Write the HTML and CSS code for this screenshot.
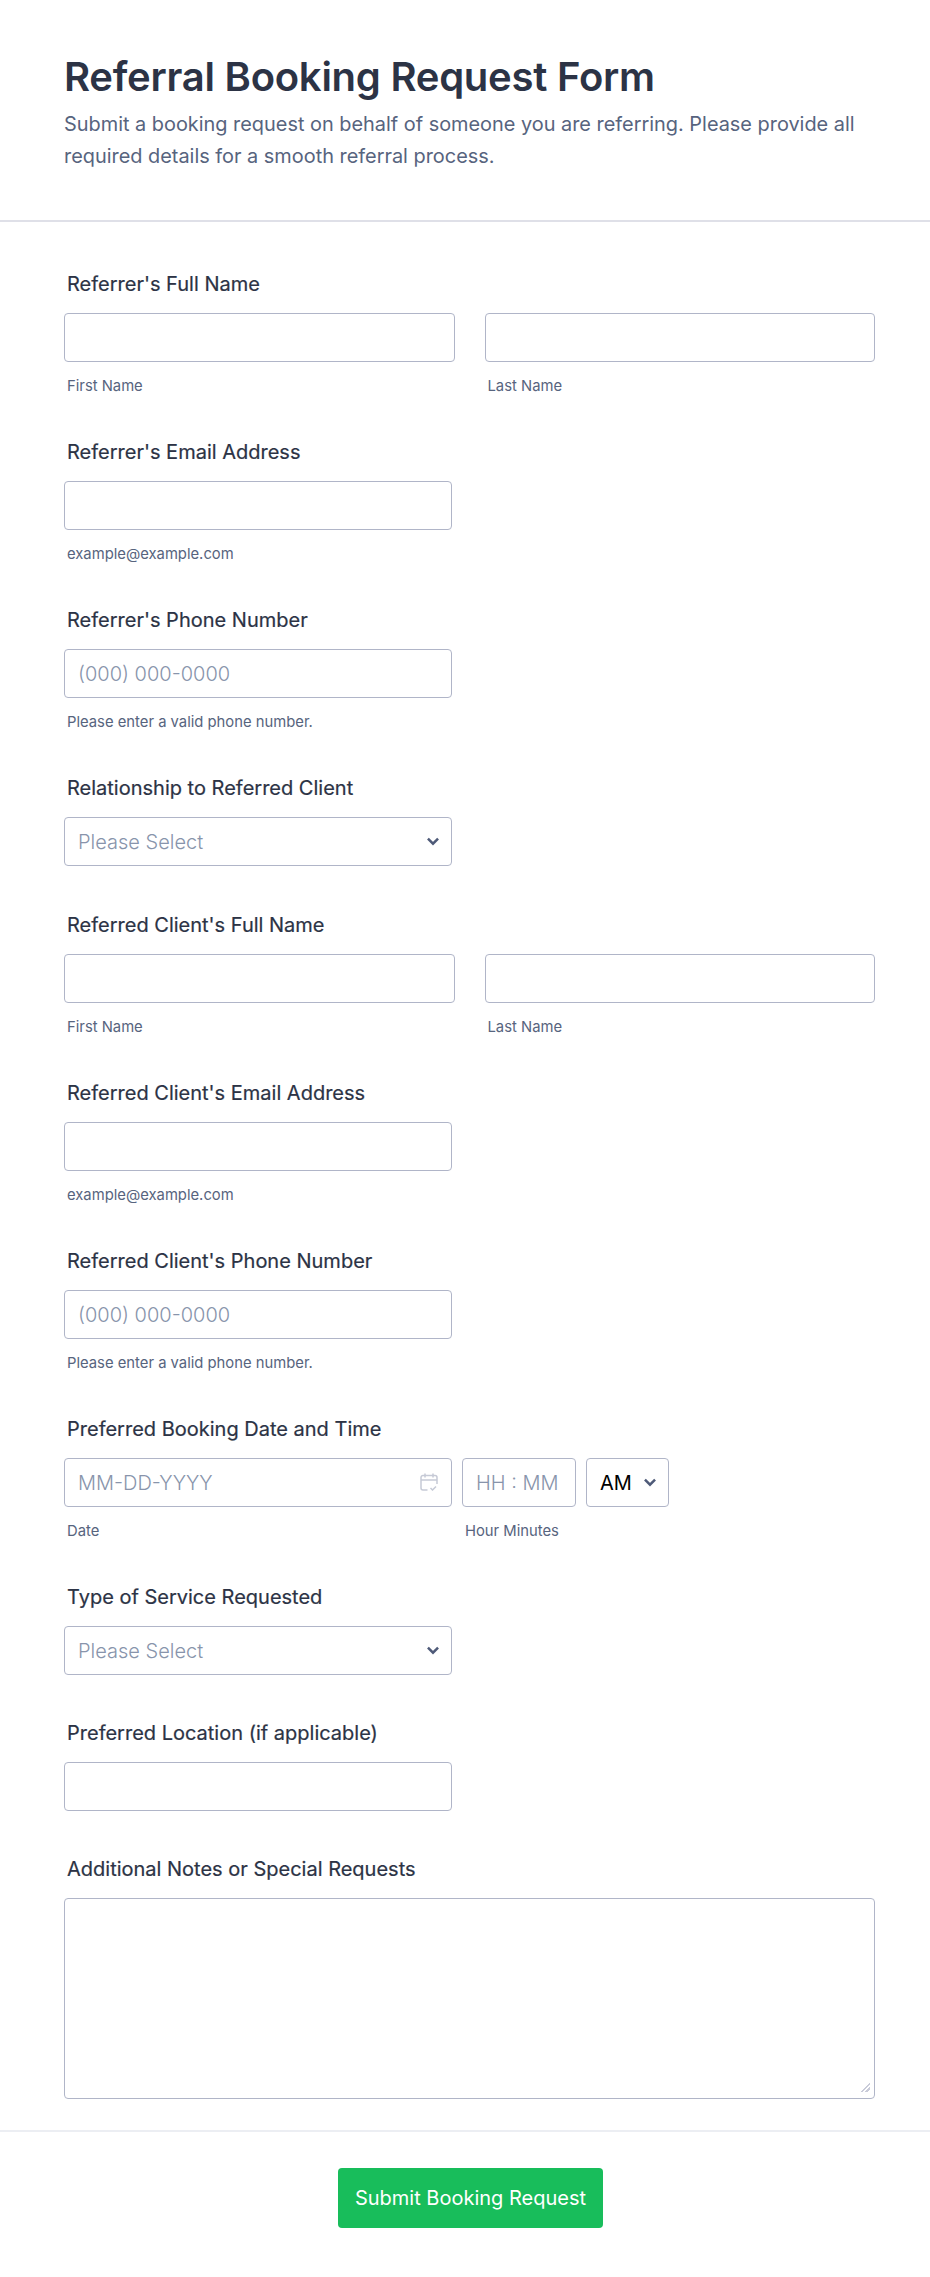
FILE: index.html
```html
<!DOCTYPE html>
<html lang="en">
<head>
<meta charset="utf-8">
<title>Referral Booking Request Form</title>
<link rel="stylesheet" href="styles.css">
</head>
<body>
<form class="form">
  <header class="head">
    <h1 class="title">Referral Booking Request Form</h1>
    <p class="subtitle">Submit a booking request on behalf of someone you are referring. Please provide all required details for a smooth referral process.</p>
  </header>
  <div class="fields">
    <div class="field">
      <label class="label">Referrer's Full Name</label>
      <div class="pair">
        <div class="col"><input class="input" type="text"><span class="sub">First Name</span></div>
        <div class="col"><input class="input" type="text"><span class="sub">Last Name</span></div>
      </div>
    </div>
    <div class="field">
      <label class="label">Referrer's Email Address</label>
      <div class="single"><input class="input" type="text"><span class="sub">example@example.com</span></div>
    </div>
    <div class="field">
      <label class="label">Referrer's Phone Number</label>
      <div class="single"><input class="input" type="text" placeholder="(000) 000-0000"><span class="sub">Please enter a valid phone number.</span></div>
    </div>
    <div class="field">
      <label class="label">Relationship to Referred Client</label>
      <div class="single selectwrap">
        <select class="input select"><option>Please Select</option></select>
        <svg class="chev" viewBox="0 0 12 8"><path d="M1.500 1.500 6 6l4.500-4.500" fill="none" stroke="#4e5a78" stroke-width="2.200"/></svg>
      </div>
    </div>
    <div class="field">
      <label class="label">Referred Client's Full Name</label>
      <div class="pair">
        <div class="col"><input class="input" type="text"><span class="sub">First Name</span></div>
        <div class="col"><input class="input" type="text"><span class="sub">Last Name</span></div>
      </div>
    </div>
    <div class="field">
      <label class="label">Referred Client's Email Address</label>
      <div class="single"><input class="input" type="text"><span class="sub">example@example.com</span></div>
    </div>
    <div class="field">
      <label class="label">Referred Client's Phone Number</label>
      <div class="single"><input class="input" type="text" placeholder="(000) 000-0000"><span class="sub">Please enter a valid phone number.</span></div>
    </div>
    <div class="field">
      <label class="label">Preferred Booking Date and Time</label>
      <div class="datetime">
        <div class="single datewrap">
          <input class="input" type="text" placeholder="MM-DD-YYYY">
          <svg class="cal" viewBox="0 0 18 18" fill="none" stroke="#c6cad6" stroke-width="1.500"><path d="M7.500 17H3a2 2 0 0 1-2-2V4.500a2 2 0 0 1 2-2h12a2 2 0 0 1 2 2V11M1 7h16M5 .500v4M13 .500v4M10.500 15l2 2 3.500-3.500"/></svg>
          <span class="sub">Date</span>
        </div>
        <div class="time"><input class="input" type="text" placeholder="HH : MM"><span class="sub">Hour Minutes</span></div>
        <div class="ampm selectwrap">
          <select class="input select filled"><option>AM</option></select>
          <svg class="chev" viewBox="0 0 12 8"><path d="M1.500 1.500 6 6l4.500-4.500" fill="none" stroke="#4e5a78" stroke-width="2.200"/></svg>
        </div>
      </div>
    </div>
    <div class="field">
      <label class="label">Type of Service Requested</label>
      <div class="single selectwrap">
        <select class="input select"><option>Please Select</option></select>
        <svg class="chev" viewBox="0 0 12 8"><path d="M1.500 1.500 6 6l4.500-4.500" fill="none" stroke="#4e5a78" stroke-width="2.200"/></svg>
      </div>
    </div>
    <div class="field">
      <label class="label">Preferred Location (if applicable)</label>
      <div class="single"><input class="input" type="text"></div>
    </div>
    <div class="field">
      <label class="label">Additional Notes or Special Requests</label>
      <textarea class="input area"></textarea>
    </div>
  </div>
  <footer class="foot">
    <button class="submit" type="button">Submit Booking Request</button>
  </footer>
</form>
</body>
</html>
```
FILE: styles.css
```css
* { box-sizing: border-box; }
html, body { margin: 0; background: #fff; }
body { font-family: Inter, "Liberation Sans", sans-serif; color: #2c3345; }
.form { width: 930px; height: 2277px; }
.head { height: 222px; padding: 52px 64px 0; border-bottom: 2px solid #dfe0e8; }
.title { margin: 0; font-size: 40px; line-height: 50px; font-weight: 600; letter-spacing: -0.25px; color: #2c3345; }
.subtitle { margin: 6px 0 0; font-size: 19.900px; line-height: 32px; color: #57647e; width: 802px; }
.fields { padding: 46px 64px 0 64px; }
.field { margin-bottom: 42.150px; }
.label { display: block; padding-left: 3px; font-size: 20px; line-height: 32px; font-weight: 400; margin-bottom: 13px; color: #2c3345; -webkit-text-stroke: 0.2px #2c3345; }
.pair { display: flex; gap: 30px; width: 811px; }
.col { flex: 1 1 0; }
.single { width: 388px; position: relative; }
.input { display: block; width: 100%; height: 49px; padding: 1px 13px 0; border: 1px solid #b0b5c8; border-radius: 4px; background: #fff; font-family: Inter, sans-serif; font-size: 20px; font-weight: 300; color: #2c3345; outline: none; }
.input::placeholder { color: #8894ab; opacity: 1; }
.sub { display: block; padding-left: 3px; margin-top: 16px; font-size: 14.800px; line-height: 16px; color: #57647e; }
.selectwrap { position: relative; }
.select { appearance: none; -webkit-appearance: none; color: #8894ab; }
.select.filled { color: #000; font-weight: 400; }
.chev { position: absolute; right: 12px; top: 20px; width: 14px; height: 9px; }
.datetime { display: flex; gap: 10px; }
.datewrap .cal { position: absolute; right: 14px; top: 15px; width: 18px; height: 18px; }
.time { flex: 0 0 114px; }
.ampm { flex: 0 0 83px; height: 49px; }
.area { width: 811px; height: 201px; padding: 8px 13px; resize: both; }
.area::-webkit-resizer { background: linear-gradient(135deg, transparent 46%, #c9cbd9 46%, #c9cbd9 58%, transparent 58%, transparent 72%, #c9cbd9 72%, #c9cbd9 84%, transparent 84%) no-repeat right 4px bottom 6px / 9px 9px; }
.foot { margin-top: -12px; border-top: 2px solid #eceef3; padding-top: 36px; text-align: center; }
.submit { width: 265px; height: 60px; border: 0; border-radius: 4px; background: #18bd5b; color: #fff; font-family: Inter, sans-serif; font-size: 20px; font-weight: 400; margin-left: 11px; }
```
